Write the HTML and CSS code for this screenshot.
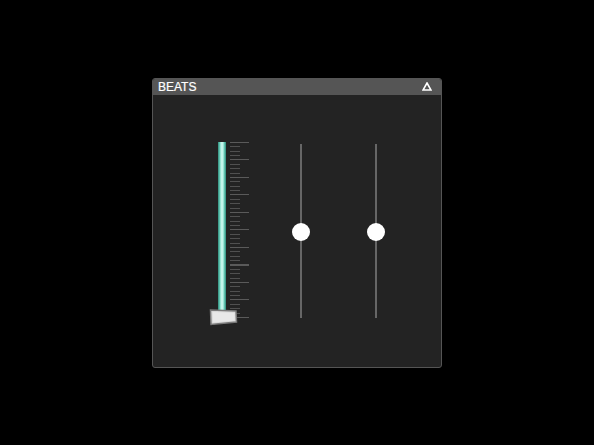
FILE: index.html
```html
<!DOCTYPE html>
<html>
<head>
	<title>beats</title>
	<link rel="stylesheet" href="styles.css">
</head>
<body>

	<div class="panel">
		<div class="panel-header">
			<span class="panel-title">BEATS</span>
			<svg class="collapse" width="10" height="9" viewBox="0 0 10 9">
				<polygon points="5,1 9,8 1,8" fill="none" stroke="#fff" stroke-width="1.6" stroke-linejoin="miter"/>
			</svg>
		</div>

		<div class="panel-body">
			<div class="fader">
				<div class="fader-bar"></div>
				<div class="fader-ticks"></div>
				<svg class="fader-handle" width="30" height="17" viewBox="0 0 30 17">
					<polygon points="1.5,1 27,2 27.5,13 2,15.5" fill="#d8d8d8" stroke="#7a7a7a" stroke-width="1.5"/>
					<polygon points="3.5,3 25.5,3.8 25.8,11.6 4,13.4" fill="#e8e8e8"/>
				</svg>
			</div>

			<div class="slider first">
				<div class="slider-track"></div>
				<div class="slider-knob"></div>
			</div>

			<div class="slider second">
				<div class="slider-track"></div>
				<div class="slider-knob"></div>
			</div>
		</div>
	</div>

</body>
</html>
```

FILE: styles.css
```css
	html, body{
		margin: 0;
		height: 100%;
	}

	body{
		background: #000;
		font-family: "Liberation Sans", Arial, sans-serif;
		display: flex;
		align-items: center;
		justify-content: center;
	}

	.panel{
		width: 288px;
		height: 288px;
		border: 1px solid #555;
		border-radius: 3px;
		background: #232323;
		overflow: hidden;
		display: flex;
		flex-direction: column;
	}

	.panel-header{
		height: 16px;
		background: #555;
		display: flex;
		align-items: center;
		justify-content: space-between;
		padding: 0 9px 0 5px;
	}

	.panel-title{
		color: #fff;
		font-size: 12px;
		line-height: 16px;
		padding-top: 1px;
		-webkit-text-stroke: 0.2px #fff;
	}

	.collapse{
		display: block;
	}

	.panel-body{
		display: flex;
		align-items: flex-start;
		padding: 47px 0 0 56px;
	}

	.fader{
		position: relative;
		width: 40px;
		height: 184px;
	}

	.fader-bar{
		margin-left: 9px;
		width: 8px;
		height: 170px;
		background: linear-gradient(to right, #2f8a7a 0, #6fd3bf 2px, #c4f4ea 3px, #c4f4ea 5px, #6fd3bf 6px, #2f8a7a 8px);
	}

	.fader-ticks{
		position: absolute;
		left: 21px;
		top: 0;
		width: 19px;
		height: 177px;
		background-image:
			repeating-linear-gradient(to bottom, #5a5a5a 0, #5a5a5a 1px, transparent 1px, transparent 17.5px),
			repeating-linear-gradient(to bottom, #505050 0, #505050 1px, transparent 1px, transparent 4.375px);
		background-size: 19px 100%, 10px 100%;
		background-repeat: no-repeat;
	}

	.fader-handle{
		position: absolute;
		left: 0;
		top: 167px;
	}

	.slider{
		position: relative;
		width: 20px;
		height: 176px;
		display: flex;
		justify-content: center;
	}

	.slider.first{
		margin-left: 42px;
		margin-top: 2px;
	}

	.slider.second{
		margin-left: 55px;
		margin-top: 2px;
	}

	.slider-track{
		width: 2px;
		height: 174px;
		background: #666;
	}

	.slider-knob{
		position: absolute;
		left: 1px;
		top: 79px;
		width: 18px;
		height: 18px;
		border-radius: 50%;
		background: #fff;
	}
```
